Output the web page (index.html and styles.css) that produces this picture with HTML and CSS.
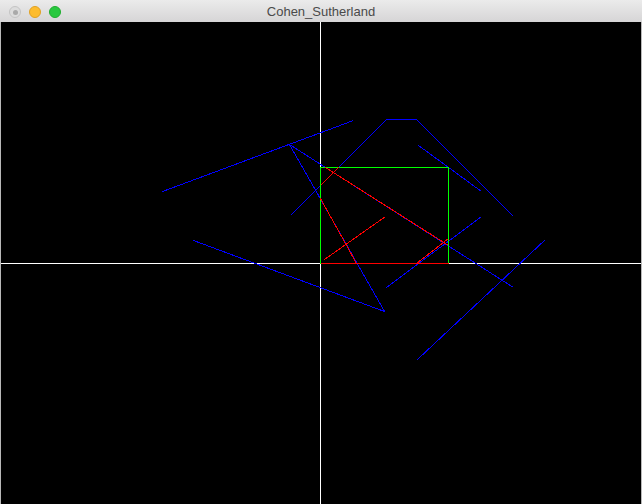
FILE: index.html
```html
<!DOCTYPE html>
<html>
<head>
<meta charset="utf-8">
<link rel="stylesheet" href="styles.css">
</head>
<body>
<div class="window">
  <div class="titlebar">
    <div class="lights">
      <span class="light close"><span class="dot"></span></span>
      <span class="light min"></span>
      <span class="light max"></span>
    </div>
    <div class="title">Cohen_Sutherland</div>
  </div>
  <div class="canvas-wrap">
    <svg class="canvas" width="640" height="482" viewBox="1 22 640 482" shape-rendering="crispEdges">
      <rect x="1" y="22" width="640" height="482" fill="#000"/>
      <g stroke="#fff" stroke-width="1">
        <line x1="320.5" y1="22" x2="320.5" y2="504"/>
        <line x1="1" y1="263.5" x2="641" y2="263.5"/>
      </g>
      <g stroke="#0000ff" stroke-width="1" fill="none">
        <polyline points="290.5,215.5 386.5,119.5 416.5,119.5 513.5,216.5"/>
        <line x1="162.5" y1="191.5" x2="353.5" y2="120.5"/>
        <polyline points="193.5,240.5 384.5,311.5 289.5,144.5 513.5,287.5"/>
        <line x1="386.5" y1="287.5" x2="481.5" y2="216.5"/>
        <line x1="418.5" y1="145.5" x2="481.5" y2="191.5"/>
        <line x1="417.5" y1="359.5" x2="545.5" y2="239.5"/>
      </g>
      <g stroke="#00ff00" stroke-width="1" fill="none">
        <polyline points="320.5,263.5 320.5,167.5 448.5,167.5 448.5,263.5"/>
      </g>
      <g stroke="#ff0000" stroke-width="1">
        <line x1="320.5" y1="263.5" x2="448.5" y2="263.5"/>
        <line x1="320.5" y1="185.5" x2="338.5" y2="167.5"/>
        <line x1="325.5" y1="167.5" x2="448.5" y2="245.5"/>
        <line x1="320.5" y1="198.5" x2="356.5" y2="263.5"/>
        <line x1="324.5" y1="259.5" x2="385.5" y2="216.5"/>
        <line x1="416.5" y1="263.5" x2="448.5" y2="238.5"/>
      </g>
    </svg>
  </div>
</div>
</body>
</html>
```
FILE: styles.css
```css
html, body {
  margin: 0;
  padding: 0;
  background: #000;
  width: 642px;
  height: 504px;
  overflow: hidden;
}
.window {
  width: 642px;
  height: 504px;
  display: flex;
  flex-direction: column;
  background: #c9c9c9;
}
.titlebar {
  height: 22px;
  flex: none;
  position: relative;
  background: linear-gradient(#ebebeb, #d6d5d6);
  display: flex;
  align-items: center;
  justify-content: center;
}
.lights {
  position: absolute;
  left: 9px;
  top: 6px;
  display: flex;
  gap: 8px;
}
.light {
  width: 12px;
  height: 12px;
  border-radius: 50%;
  box-sizing: border-box;
  display: flex;
  align-items: center;
  justify-content: center;
}
.close {
  background: #dcdcdc;
  border: 1px solid #c4c4c4;
}
.close .dot {
  width: 5px;
  height: 5px;
  border-radius: 50%;
  background: #a9a9a9;
}
.min {
  background: #fdbc2e;
  border: 1px solid #e0a123;
}
.max {
  background: #28c83f;
  border: 1px solid #1fad2e;
}
.title {
  font-family: "Liberation Sans", Arial, sans-serif;
  font-size: 13px;
  color: #4a4a4a;
  line-height: 22px;
  padding-top: 1px;
}
.canvas-wrap {
  flex: 1;
  display: flex;
  padding: 0 1px;
  background: #b9b9b9;
}
.canvas {
  display: block;
}
```
